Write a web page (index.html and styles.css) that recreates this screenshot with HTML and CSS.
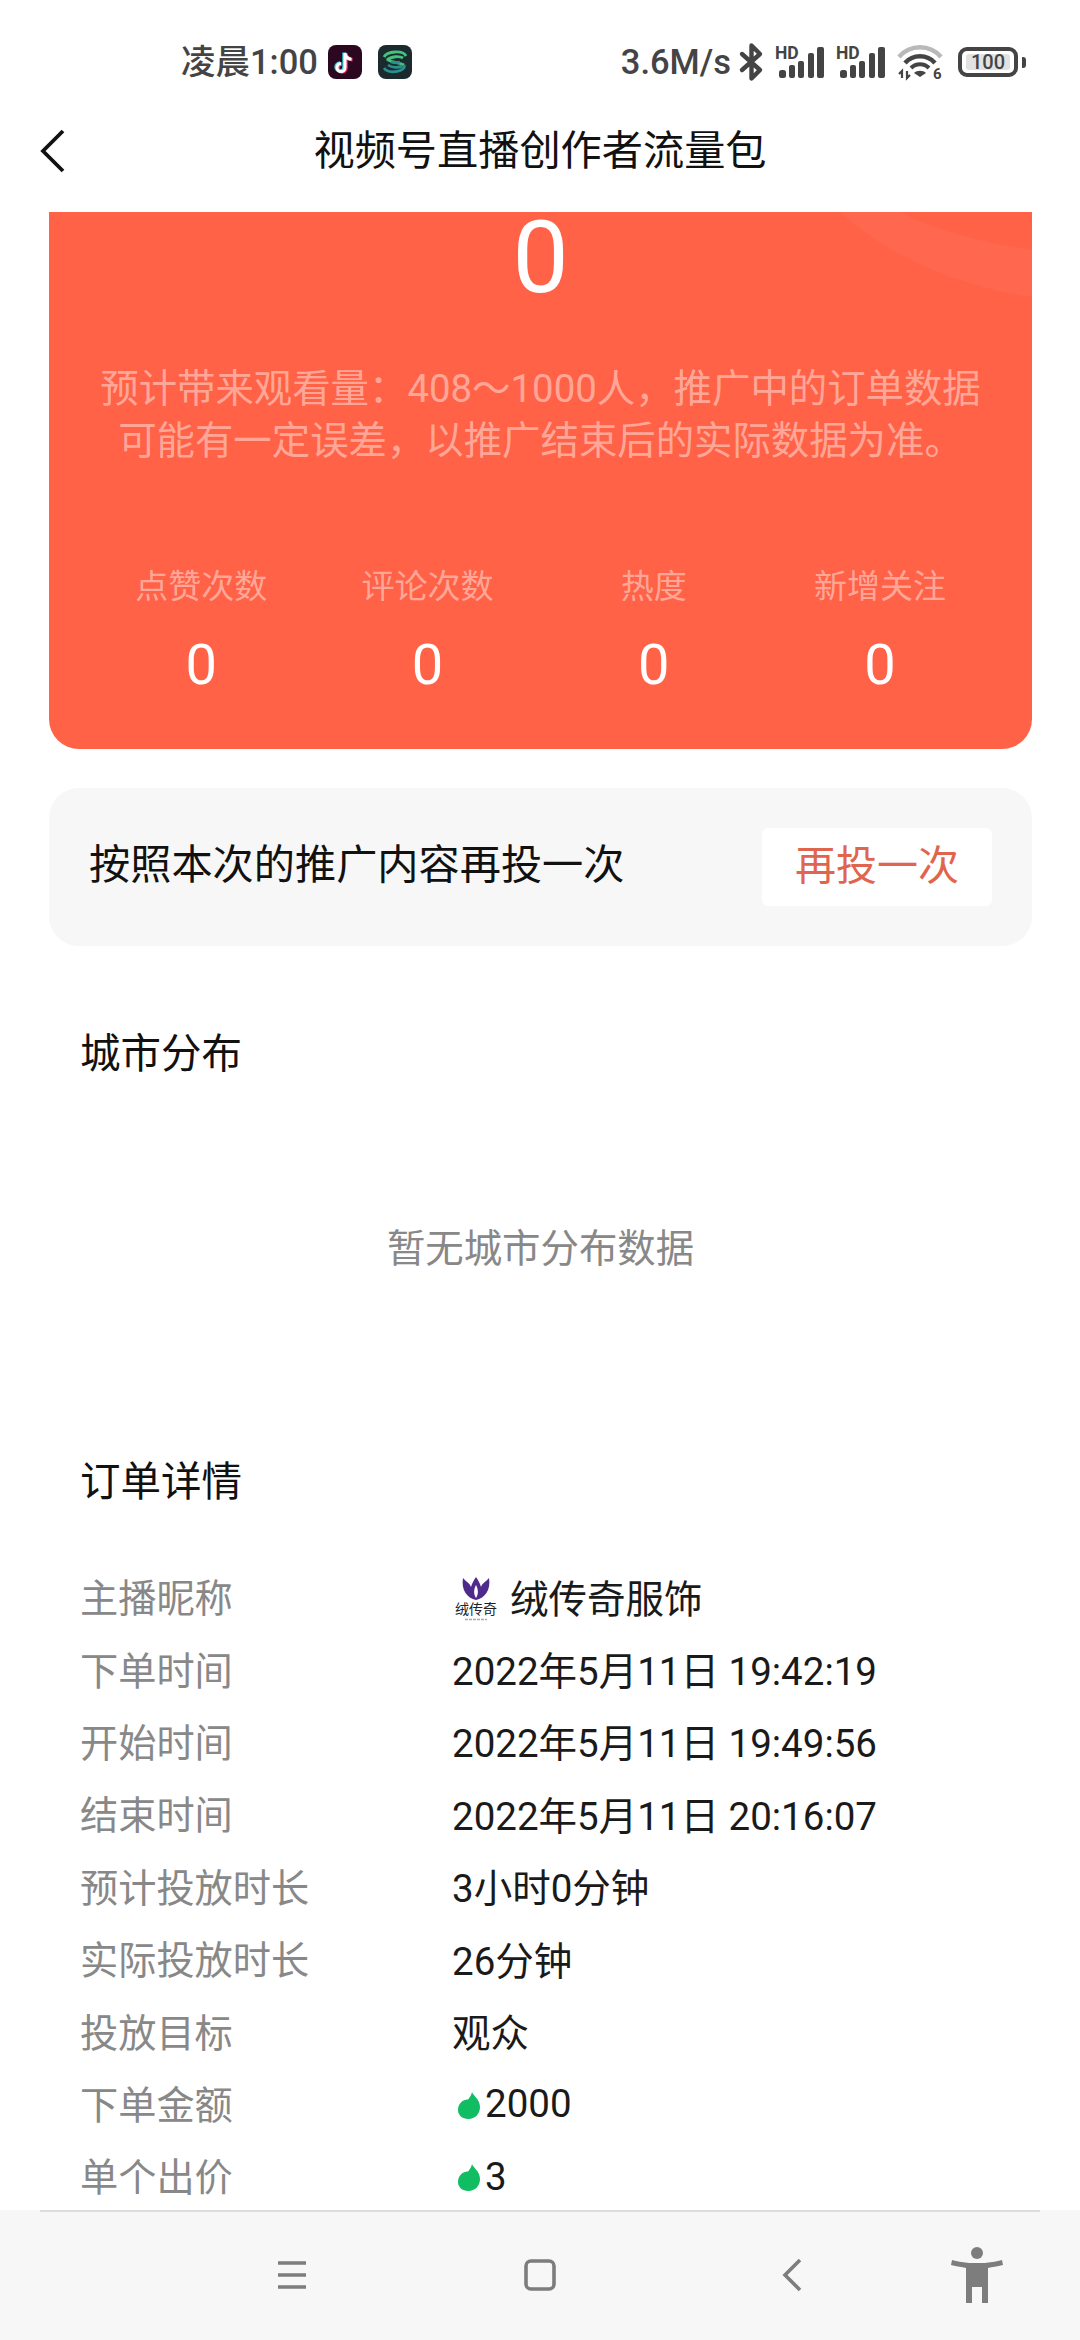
FILE: index.html
```html
<!DOCTYPE html>
<html lang="zh">
<head>
<meta charset="utf-8">
<title>视频号直播创作者流量包</title>
<link rel="stylesheet" href="styles.css">
</head>
<body>
<div class="page">
  <div class="statusbar">
    <div class="sb-left">
      <span class="sb-time">凌晨1:00</span>
      <svg class="app-ic" viewBox="0 0 34 34"><rect width="34" height="34" rx="8" fill="#2b0820"/><path d="M17 8v14.500a4 4 0 1 1-4-4M17 8c.5 3.500 3 6 6.500 6.300" fill="none" stroke="#25d8e0" stroke-width="3.400" transform="translate(-1 -.5)"/><path d="M17 8v14.500a4 4 0 1 1-4-4M17 8c.5 3.500 3 6 6.500 6.300" fill="none" stroke="#f0386b" stroke-width="3.400" transform="translate(1 .5)"/><path d="M17 8v14.500a4 4 0 1 1-4-4M17 8c.5 3.500 3 6 6.500 6.300" fill="none" stroke="#fff" stroke-width="3"/></svg>
      <svg class="app-ic" viewBox="0 0 34 34"><rect width="34" height="34" rx="8" fill="#1b2a2c"/><path d="M6 12c3-6 19-7 22-1M9 15c4-4 13-4 16-2M9 14c4 4 12 3 17 6" fill="none" stroke="#43c37f" stroke-width="2.800"/><path d="M26 20c3 6-15 10-20 3M10 20c4 3 11 3 14 1M13 17c3 1 6 1 9 0" fill="none" stroke="#2a8f8f" stroke-width="2.800"/></svg>
    </div>
    <div class="sb-right">
      <span class="sb-speed">3.6M/s</span>
      <svg class="bt" viewBox="0 0 25 38"><path d="M3 11l18 16-8.500 8.500V2.500L21 11 3 27" fill="none" stroke="#444" stroke-width="4.400" stroke-linejoin="round" stroke-linecap="round"/></svg>
      <svg class="sig" viewBox="0 0 50 34"><text x="0" y="14" class="hd">HD</text><rect x="4" y="25" width="7" height="8" rx="2.500" fill="#444"/><rect x="14" y="20" width="6" height="13" rx="2" fill="#444"/><rect x="23" y="16" width="6" height="17" rx="2" fill="#444"/><rect x="33" y="8" width="6" height="25" rx="2" fill="#444"/><rect x="42" y="2" width="7" height="31" rx="2" fill="#444"/></svg>
      <svg class="sig" viewBox="0 0 50 34"><text x="0" y="14" class="hd">HD</text><rect x="4" y="25" width="7" height="8" rx="2.500" fill="#444"/><rect x="14" y="20" width="6" height="13" rx="2" fill="#444"/><rect x="23" y="16" width="6" height="17" rx="2" fill="#444"/><rect x="33" y="8" width="6" height="25" rx="2" fill="#444"/><rect x="42" y="2" width="7" height="31" rx="2" fill="#444"/></svg>
      <svg class="wifi" viewBox="0 0 46 36"><path d="M2 13C13 0 33 0 44 13" fill="none" stroke="#b9b9b9" stroke-width="4.500"/><path d="M8 19C16 10 30 10 38 19" fill="none" stroke="#444" stroke-width="4.500"/><path d="M14 24c5-5 13-5 18 0" fill="none" stroke="#444" stroke-width="4"/><path d="M23 33l-6-4c3-3 9-3 12 0z" fill="#444"/><path d="M5 34v-7l-3 3M10 27v7l3-3" fill="none" stroke="#444" stroke-width="2.200"/><text x="36" y="35" class="six">6</text></svg>
      <div class="battery"><span class="batt-fill">100</span></div>
      <span class="batt-cap"></span>
    </div>
  </div>
  <header class="topbar">
    <svg class="back" viewBox="0 0 26 44"><path d="M23 2L3 22l20 20" fill="none" stroke="#111" stroke-width="3.800"/></svg>
    <h1 class="title">视频号直播创作者流量包</h1>
  </header>
  <main class="content">
    <section class="hero">
      <svg class="hero-deco" viewBox="0 0 192 85"><path d="M0 0C50 45 120 75 192 85V38C140 30 100 20 60 0z" fill="#fff" opacity=".04"/></svg>
      <div class="hero-num">0</div>
      <p class="hero-desc">预计带来观看量&#xFF1A;408&#xFF5E;1000人&#xFF0C;推广中的订单数据<br>可能有一定误差&#xFF0C;以推广结束后的实际数据为准&#x3002;</p>
      <div class="stats">
        <div class="stat"><span class="stat-label">点赞次数</span><span class="stat-val">0</span></div>
        <div class="stat"><span class="stat-label">评论次数</span><span class="stat-val">0</span></div>
        <div class="stat"><span class="stat-label">热度</span><span class="stat-val">0</span></div>
        <div class="stat"><span class="stat-label">新增关注</span><span class="stat-val">0</span></div>
      </div>
    </section>
    <section class="repeat">
      <span class="repeat-text">按照本次的推广内容再投一次</span>
      <span class="repeat-btn">再投一次</span>
    </section>
    <h2 class="sec-title sec-city">城市分布</h2>
    <p class="empty">暂无城市分布数据</p>
    <h2 class="sec-title sec-order">订单详情</h2>
    <dl class="rows">
      <div class="row"><dt>主播昵称</dt><dd><svg class="avatar" viewBox="0 0 42 46"><path d="M21 25C12 23 6 15 8 3c3 4 7 5 8 9 1-4 3-7 5-10 2 3 4 6 5 10 1-4 5-5 8-9 2 12-4 20-13 22z" fill="#4f2a8c"/><path d="M21 23c-2.500-4-2.500-8 0-13 2.500 5 2.500 9 0 13z" fill="#fff"/><text x="21" y="39" class="avatar-name">绒传奇</text><path d="M10 44.500h22" stroke="#aaa" stroke-width="1.500" stroke-dasharray="3 1"/></svg><span>绒传奇服饰</span></dd></div>
      <div class="row"><dt>下单时间</dt><dd>2022年5月11日 19:42:19</dd></div>
      <div class="row"><dt>开始时间</dt><dd>2022年5月11日 19:49:56</dd></div>
      <div class="row"><dt>结束时间</dt><dd>2022年5月11日 20:16:07</dd></div>
      <div class="row"><dt>预计投放时长</dt><dd>3小时0分钟</dd></div>
      <div class="row"><dt>实际投放时长</dt><dd>26分钟</dd></div>
      <div class="row"><dt>投放目标</dt><dd>观众</dd></div>
      <div class="row"><dt>下单金额</dt><dd><svg class="flame" viewBox="0 0 22 27"><path d="M14 0c.5 3 8 7 8 15 0 7-5 12-11.500 12C4 27 0 23 0 18 0 11 6 7 10 7.500 12 5 13.500 3 14 0z" fill="#10bd63"/></svg><span class="amount">2000</span></dd></div>
      <div class="row"><dt>单个出价</dt><dd><svg class="flame" viewBox="0 0 22 27"><path d="M14 0c.5 3 8 7 8 15 0 7-5 12-11.500 12C4 27 0 23 0 18 0 11 6 7 10 7.500 12 5 13.500 3 14 0z" fill="#10bd63"/></svg><span class="amount">3</span></dd></div>
    </dl>
  </main>
  <nav class="navbar">
    <svg class="nav-menu" viewBox="0 0 32 32"><path d="M2 4h28M2 16h28M2 28h28" stroke="#7d7d7d" stroke-width="3.600"/></svg>
    <svg class="nav-home" viewBox="0 0 32 32"><rect x="2" y="2" width="28" height="28" rx="5" fill="none" stroke="#7d7d7d" stroke-width="3.600"/></svg>
    <svg class="nav-back" viewBox="0 0 20 34"><path d="M18 2L3 17l15 15" fill="none" stroke="#7d7d7d" stroke-width="3.600"/></svg>
    <svg class="nav-acc" viewBox="0 0 50 56"><circle cx="25" cy="6" r="6" fill="#7d7d7d"/><path d="M0 13c8 2 12 2.500 17 3h16c5-.5 9-1 17-3l1 5c-6 1.500-11 2-15 3v35h-6V40h-10v16h-6V21c-4-1-9-1.500-15-3z" fill="#7d7d7d"/></svg>
  </nav>
</div>
</body>
</html>
```
FILE: styles.css
```css
* { box-sizing: border-box; }
html, body { margin: 0; padding: 0; background: #fff; }
body { font-family: Roboto, "Noto Sans CJK SC", sans-serif; color: #1a1a1a; }
.page { width: 1080px; height: 2340px; display: flex; flex-direction: column; overflow: hidden; }
svg { overflow: visible; }

.statusbar { height: 100px; flex: none; display: flex; justify-content: space-between; align-items: center; padding: 24px 54px 0 181px; }
.sb-left { display: flex; align-items: center; }
.sb-time { font-size: 34.5px; font-weight: 500; color: #444; line-height: 40px; margin-right: 10px; }
.app-ic { width: 34px; height: 34px; margin-right: 16px; }
.sb-right { display: flex; align-items: center; }
.sb-speed { font-size: 34.5px; font-weight: 500; color: #444; line-height: 40px; margin-right: 8px; }
.bt { width: 25px; height: 38px; margin-right: 11px; }
.sig { width: 50px; height: 34px; margin-right: 11px; }
.hd { font: 700 17.5px Roboto, sans-serif; fill: #444; }
.wifi { width: 46px; height: 36px; margin-right: 15px; }
.six { font: 700 15px Roboto, sans-serif; fill: #444; }
.battery { width: 60px; height: 30px; border: 4px solid #444; border-radius: 9px; padding: 3px 4px; }
.batt-fill { display: block; height: 16px; background: #e2e2e2; border-radius: 3px; font-size: 20px; line-height: 16px; font-weight: 500; color: #444; text-align: center; }
.batt-cap { width: 4px; height: 11px; background: #444; border-radius: 0 3px 3px 0; margin-left: 4px; }

.topbar { height: 112px; flex: none; display: flex; align-items: center; justify-content: center; position: relative; padding-bottom: 8px; }
.back { position: absolute; left: 40px; top: 29px; width: 26px; height: 44px; }
.title { margin: 0; font-size: 41.2px; font-weight: 400; color: #111; line-height: 1; }

.content { flex: 1; min-height: 0; overflow: hidden; padding: 0 48px 0 49px; }

.hero { height: 537px; background: #ff6247; border-radius: 0 0 30px 30px; position: relative; overflow: hidden; text-align: center; color: #fff; }
.hero-deco { position: absolute; right: 0; top: 0; width: 192px; height: 85px; }
.hero-num { font-size: 100px; line-height: 92px; height: 92px; position: relative; }
.hero-desc { margin: 0; padding-top: 59px; font-size: 38.4px; line-height: 52px; color: rgba(255,255,255,.45); position: relative; }
.stats { display: grid; grid-template-columns: repeat(4, 226.3px); padding: 0 39px; margin-top: 98px; position: relative; }
.stat { display: flex; flex-direction: column; align-items: center; }
.stat-label { font-size: 33px; line-height: 44px; color: rgba(255,255,255,.45); }
.stat-val { font-size: 56px; line-height: 60px; margin-top: 26px; color: #fff; }

.repeat { margin-top: 39px; height: 158px; background: #f7f7f7; border-radius: 30px; display: flex; align-items: center; justify-content: space-between; padding: 0 40px; }
.repeat-text { font-size: 41.2px; line-height: 78px; margin-bottom: 4px; color: #111; }
.repeat-btn { width: 230px; height: 78px; background: #fff; border-radius: 6px; color: #e0654e; font-size: 41px; line-height: 76px; text-align: center; }

.sec-title { margin: 0; font-size: 40.5px; font-weight: 400; line-height: 56px; color: #111; padding-left: 31px; }
.sec-city { margin-top: 80px; }
.empty { margin: 138.5px 0 0; text-align: center; font-size: 38.4px; line-height: 56px; color: #888; }
.sec-order { margin-top: 177.5px; }

.rows { margin: 49.5px 0 0; padding-left: 31px; }
.row { display: flex; height: 72.4px; align-items: center; }
.row dt { width: 372px; font-size: 38.2px; color: #888; }
.row dd { margin: 0; display: flex; align-items: center; font-size: 38.5px; white-space: nowrap; }
.avatar { width: 42px; height: 46px; margin: 4px 13px 0 3px; }
.avatar-name { font-size: 14px; text-anchor: middle; fill: #222; font-family: "Noto Sans CJK SC", sans-serif; }
.flame { width: 22px; height: 27px; margin: 6px 5px 0 6px; }
.amount { margin-top: 3px; }

.navbar { height: 130px; flex: none; background: #f7f7f7; display: flex; align-items: center; position: relative; }
.navbar::before { content: ""; position: absolute; left: 40px; right: 40px; top: 0; height: 2px; background: #ddd; }
.nav-menu { width: 32px; height: 32px; margin-left: 276px; }
.nav-home { width: 32px; height: 32px; margin-left: 216px; }
.nav-back { width: 20px; height: 34px; margin-left: 226px; }
.nav-acc { width: 50px; height: 56px; margin-left: 150px; }
```
